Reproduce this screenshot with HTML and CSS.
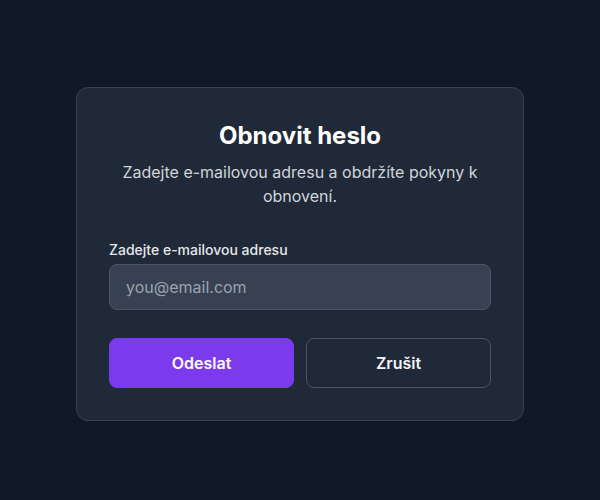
FILE: index.html
```html
<!DOCTYPE html>
<html lang="cs">
<head>
<meta charset="utf-8">
<title>Obnovit heslo</title>
<link rel="stylesheet" href="styles.css">
</head>
<body>
<main class="page">
  <form class="card">
    <h1 class="title">Obnovit heslo</h1>
    <p class="subtitle">Zadejte e-mailovou adresu a obdržíte pokyny k obnovení.</p>
    <label class="label" for="email">Zadejte e-mailovou adresu</label>
    <input class="input" id="email" type="email" placeholder="you@email.com">
    <div class="actions">
      <button type="submit" class="btn btn-primary">Odeslat</button>
      <button type="button" class="btn btn-secondary">Zrušit</button>
    </div>
  </form>
</main>
</body>
</html>
```

FILE: styles.css
```css
* { box-sizing: border-box; }
html, body {
  margin: 0;
  padding: 0;
  background: #111827;
  font-family: Inter, "Noto Sans", sans-serif;
}
.page {
  width: 600px;
  height: 500px;
  display: flex;
  align-items: center;
  justify-content: center;
  padding-top: 8px;
}
.card {
  width: 448px;
  background: #1f2937;
  border: 1px solid #374151;
  border-radius: 12px;
  padding: 32px;
  display: flex;
  flex-direction: column;
}
.title {
  margin: 0;
  font-size: 24px;
  line-height: 32px;
  font-weight: 700;
  color: #ffffff;
  text-align: center;
}
.subtitle {
  margin: 8px 0 0;
  font-size: 16px;
  line-height: 24px;
  color: #d1d5db;
  text-align: center;
}
.label {
  margin-top: 32px;
  margin-bottom: 4px;
  font-size: 14px;
  line-height: 20px;
  font-weight: 500;
  color: #e5e7eb;
}
.input {
  height: 46px;
  padding: 10px 16px;
  font-family: inherit;
  font-size: 16px;
  line-height: 24px;
  color: #f9fafb;
  background: #374151;
  border: 1px solid #4b5563;
  border-radius: 8px;
  outline: none;
}
.input::placeholder { color: #9ca3af; }
.actions {
  margin-top: 28px;
  display: grid;
  grid-template-columns: 1fr 1fr;
  gap: 12px;
}
.btn {
  height: 50px;
  font-family: inherit;
  font-size: 16px;
  line-height: 24px;
  font-weight: 600;
  border-radius: 8px;
  cursor: pointer;
}
.btn-primary {
  background: #7c3aed;
  border: 1px solid #7c3aed;
  color: #ffffff;
}
.btn-secondary {
  background: transparent;
  border: 1px solid #4b5563;
  color: #f3f4f6;
}
```
